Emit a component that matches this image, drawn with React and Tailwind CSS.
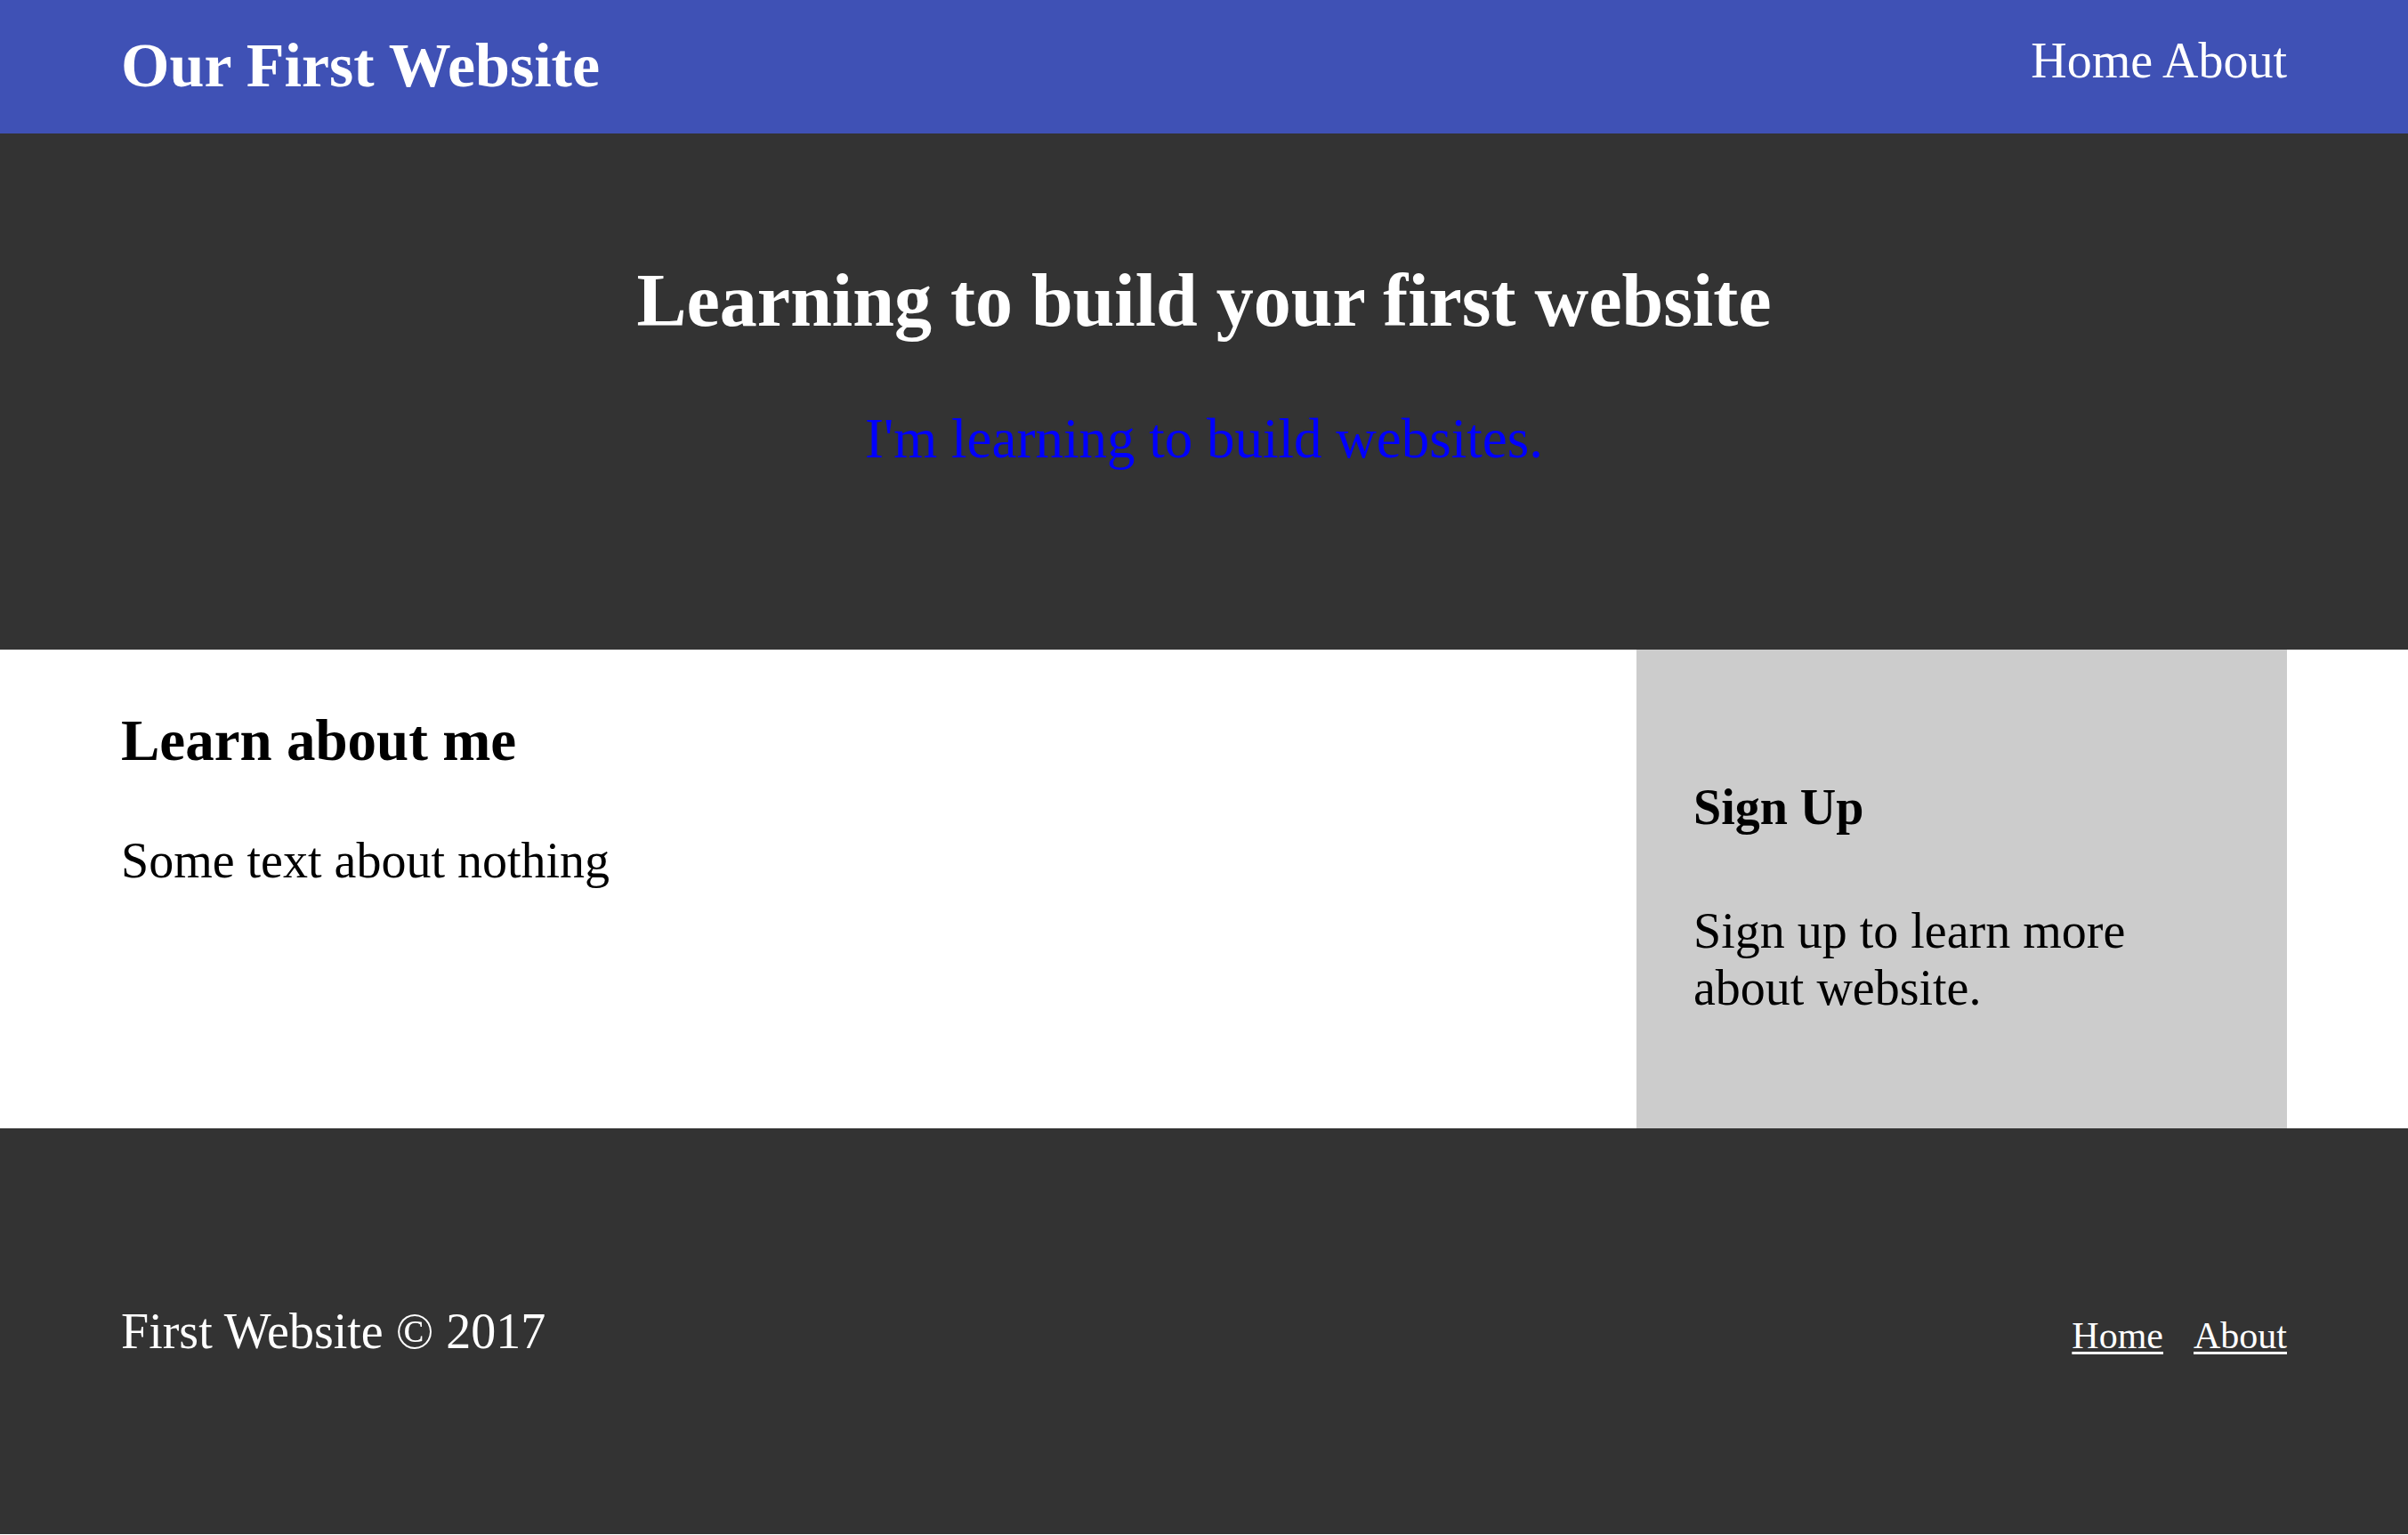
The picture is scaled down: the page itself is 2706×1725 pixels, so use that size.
export default function App() {
  return (
    <div className="font-['Liberation_Serif',serif] bg-white text-black">
      {/* top bar */}
      <header className="flex h-[150px] items-start justify-between bg-[#3f51b5] px-[136px] pt-[36px] text-white">
        <h1 className="-mt-[2px] text-[70px] font-bold leading-[normal]">Our First Website</h1>
        <nav className="text-[56px] leading-[normal]">
          <a href="#">Home</a> <a href="#">About</a>
        </nav>
      </header>

      {/* hero */}
      <section className="h-[580px] bg-[#333333] pt-[139px] text-center">
        <h2 className="text-[84px] font-bold leading-[normal] text-white">
          Learning to build your first website
        </h2>
        <p className="mt-[71px] text-[63px] leading-[normal] text-[#0000ff]">
          I'm learning to build websites.
        </p>
      </section>

      {/* content + sidebar */}
      <main className="flex h-[538px] px-[136px]">
        <div className="flex-1 pt-[65px]">
          <h2 className="text-[65px] font-bold leading-[normal]">Learn about me</h2>
          <p className="mt-[65px] text-[56px] leading-[normal]">Some text about nothing</p>
        </div>
        <aside className="w-[731px] bg-[#cccccc] px-[64px] pt-[145px]">
          <h3 className="text-[56px] font-bold leading-[normal]">Sign Up</h3>
          <p className="mt-[75px] text-[56px] leading-[64px]">
            Sign up to learn more about website.
          </p>
        </aside>
      </main>

      {/* footer */}
      <footer className="flex h-[456px] items-center bg-[#333333] px-[136px] text-white">
        <div className="flex w-full items-baseline justify-between">
          <p className="text-[56px] leading-[normal]">First Website © 2017</p>
          <div className="flex gap-[34px] text-[42px] leading-[normal]">
            <a href="#" className="underline decoration-[length:3px] underline-offset-4">Home</a>
            <a href="#" className="underline decoration-[length:3px] underline-offset-4">About</a>
          </div>
        </div>
      </footer>
    </div>
  );
}
